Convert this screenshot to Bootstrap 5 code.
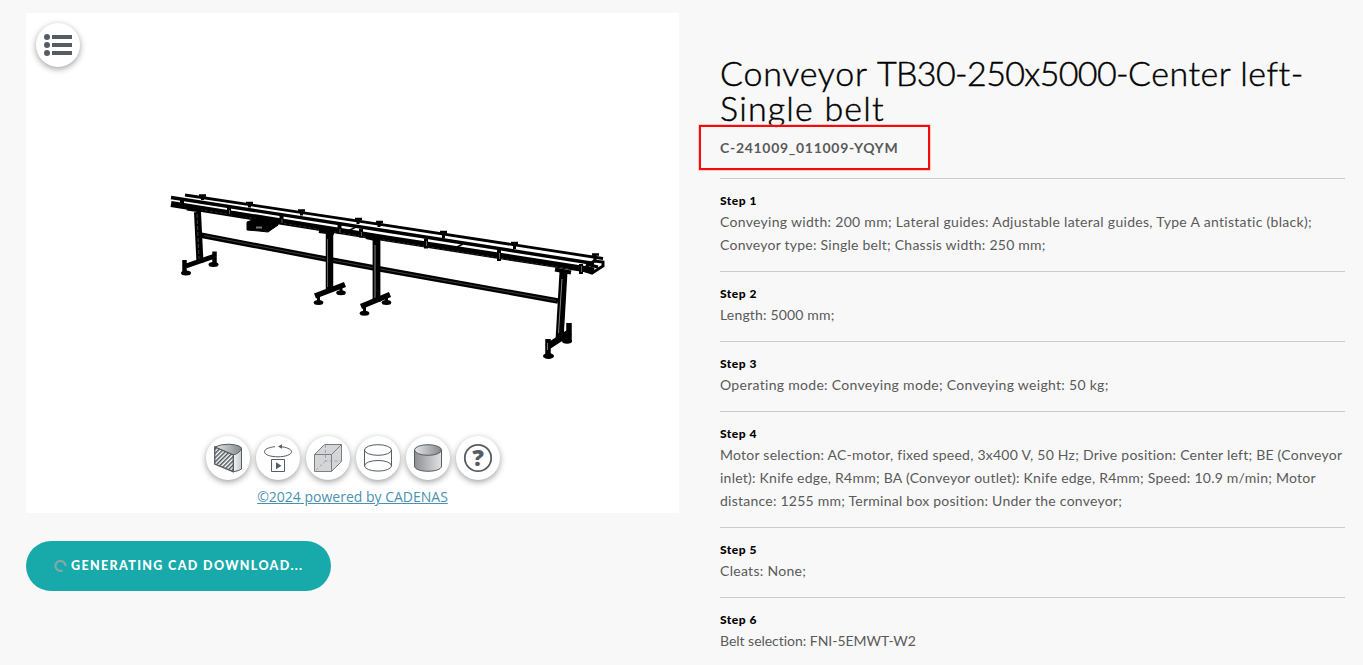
<!DOCTYPE html>
<html lang="en">
<head>
<meta charset="utf-8">
<meta name="viewport" content="width=device-width, initial-scale=1">
<title>Conveyor configuration</title>
<link href="https://cdn.jsdelivr.net/npm/bootstrap@5.3.0/dist/css/bootstrap.min.css" rel="stylesheet">
<style>
body{background:#f8f8f8;color:#5a5a5a;font-family:Lato,"Liberation Sans",sans-serif;height:665px;overflow:hidden}
.page-grid{padding:13px 18px 0 26px}
.viewer-col{width:653px;margin-right:41px}
.viewer{height:500px;background:#fff}
.round-btn{width:44px;height:44px;background:#fff;box-shadow:0 2px 6px rgba(0,0,0,.38);border:0;padding:0}
.round-btn svg{display:block}
.menu-btn{margin:10px 0 0 10px}
.model{margin:113px 0 66px 134px}
.tools{gap:6px;margin-left:1px}
.powered{font:14px/20px "Open Sans",sans-serif;color:#4a90b0;margin-top:7px}
.cad-btn,.cad-btn:hover{width:305px;height:50px;margin-top:28px;background:#18aaab;color:#fff;font-size:12.5px;font-weight:900;letter-spacing:1.36px;padding-left:28px}
.details{width:625px;padding-top:42px}
.details h1{font-size:34px;line-height:35px;font-weight:300;color:#000;letter-spacing:1.2px;margin:0;-webkit-text-stroke:.45px #000}
.t-word{letter-spacing:.75px}
.t-code{letter-spacing:-.62px}
.t-pos{letter-spacing:.5px}
.code-row{height:53px;padding-top:13px;font-size:14px;line-height:20px;font-weight:700;letter-spacing:.7px}
.red-box{left:699px;top:125px;width:231px;height:45px;border:2px solid #f60a0a;box-shadow:0 0 0 .5px #ff9a9a}
.step{border-top:1px solid #ccc;padding:11px 0 15px;font-size:14px;line-height:23px;letter-spacing:.24px;white-space:nowrap}
.step h2{font-size:12px;line-height:21px;font-weight:900;color:#000;letter-spacing:.5px;margin:0 0 -1px}
.ls-wide{letter-spacing:.3px}
.ls-snug{letter-spacing:.17px}
.ls-none{letter-spacing:-.03px}
</style>
</head>
<body>
<main class="page-grid d-flex">
<section class="viewer-col flex-shrink-0">
<div class="viewer d-flex flex-column align-items-start">
<button class="round-btn menu-btn rounded-circle flex-shrink-0" aria-label="Menu"><svg width="44" height="44" fill="#555c63"><circle cx="11" cy="14" r="3"/><circle cx="11" cy="22" r="3"/><circle cx="11" cy="30" r="3"/><path d="M16 12h20v4H16zM16 20h20v4H16zM16 28h20v4H16z"/></svg></button>
<svg class="model flex-shrink-0" width="460" height="190" viewBox="160 180 460 190" fill="none" stroke="#000">
<path d="M200 235L326 259L380 269L558 301" stroke-width="5.4"/><path d="M204 235.6L326 259L380 269L556 300.5" stroke="#555" stroke-width=".7"/>
<path d="M185 195L390 225.8L603 258.5" stroke-width="2.8"/>
<path d="M171 197.5L390 231.5L594 263.5" stroke-width="3.4"/>
<path d="M171 204L390 239L594 270.5" stroke-width="6.3"/>
<path d="M190 208L390 241L570 269" stroke="#444" stroke-width=".6" stroke-dasharray="3 2"/>
<path d="M187 208.500l14 2M232 213l15 3M319 231l15 2M366 237l14 3M555 269.500l16 3" stroke-width="4"/>
<path d="M580 269l12 4 11-7v-4l-9-1-8 6M586 264l12 3" stroke-width="3"/>
<path d="M202.500 195v5M249.500 202.500v5M301.500 210.500v5M358 219v5M379 222v5M443.500 232v6M514.500 243v6M595 254v6" stroke-width="3"/>
<path d="M199 195.500h7M246 203h7M298 210.500h7M355 219h7M376 222h7M440 232h7M511 243h7M592 254.500h7" stroke-width="2.5"/>
<path d="M182 199v8M229 207v9M281.500 215v9M339.500 225v9M361 228.500v9M426 238.500v10M499 250v11M581 264v10" stroke-width="4"/>
<path d="M229.500 210v4M282 219v4M340 229v4M361.500 232v4M426.500 241v5M499.500 253v6M581.500 266v6" stroke="#777" stroke-width=".8"/>
<path d="M247 222l11-4 20 4v3l-10 7-9-1-12-1z" fill="#000"/><path d="M256 226.500h6v2h-6z" fill="#777" stroke="none"/><path d="M455 248l8-4M348 231l8-4" stroke-width="1.5"/>
<g>
<path d="M197.500 212L200 263" stroke-width="7"/><path d="M197 214L199 259" stroke="#555" stroke-width=".8" stroke-dasharray="4 2"/>
<path d="M186 266L215 256" stroke-width="5"/><path d="M184.500 260v12M214.500 251.500v12" stroke-width="4.500"/>
<path d="M329.500 231v60" stroke-width="7.500"/><path d="M327.500 239v48" stroke="#777" stroke-width=".8"/>
<path d="M315 296L345 284.500" stroke-width="5.500"/><path d="M318.500 297v5M341 287v6" stroke-width="3"/>
<path d="M376.500 240v62" stroke-width="7.800"/><path d="M375 245v53" stroke="#888" stroke-width="1"/>
<path d="M361 306.500L390 294.500" stroke-width="5.500"/><path d="M364.500 307v6M386.500 297v5" stroke-width="3"/>
<path d="M563.500 272L559.500 340" stroke-width="8"/><path d="M562 279L558.500 333" stroke="#888" stroke-width="1"/>
<path d="M547 347L570 332" stroke-width="6.500"/><path d="M548 339v15M569 323v19" stroke-width="5.500"/><path d="M547.500 343v7" stroke="#777" stroke-width="1"/>
<g fill="#000" stroke="none"><ellipse cx="186" cy="273" rx="5" ry="2.500"/><ellipse cx="213.500" cy="264.500" rx="5" ry="2.500"/><ellipse cx="318.500" cy="302.500" rx="4.800" ry="2.500"/><ellipse cx="341" cy="292.800" rx="4.800" ry="2.500"/><ellipse cx="364.500" cy="313.300" rx="4.800" ry="2.500"/><ellipse cx="386.500" cy="302.500" rx="4.800" ry="2.500"/><ellipse cx="548.500" cy="356" rx="5.500" ry="3"/><ellipse cx="567" cy="341" rx="5" ry="2.800"/></g>
</g>
</svg>
<div class="tools d-flex align-self-center">
<button class="round-btn rounded-circle" aria-label="Cross section"><svg width="44" height="44"><defs><linearGradient id="metal"><stop stop-color="#8d8f92"/><stop offset="1" stop-color="#e1e2e3"/></linearGradient><linearGradient id="lid"><stop stop-color="#e5e5e6"/><stop offset="1" stop-color="#85888b"/></linearGradient><pattern id="hatch" width="3" height="3" patternUnits="userSpaceOnUse" patternTransform="rotate(45)"><path fill="#fff" d="M0 0h4v4H0z"/><path fill="#4c5359" d="M0 0h1.500v4H0z"/></pattern></defs><g stroke="#555c63" stroke-width="1"><path d="M27.300 19L35.500 12V33Q33 35 27.300 35.700Z" fill="url(#lid)" fill-opacity=".45"/><path d="M8.700 11Q15 8 23 8.200Q35 9 35.500 12.500Q34 17 27.300 19Z" fill="url(#lid)"/><path d="M8.700 11L27.300 19V35.700L8.700 28Z" fill="url(#hatch)" stroke-width="1.300"/></g></svg></button>
<button class="round-btn rounded-circle" aria-label="Rotate"><svg width="44" height="44" fill="none" stroke="#555c63"><path d="M19 10.700C12 11.400 8.500 13.400 8.500 15.800C8.500 19 15 20.800 22 20.800S35.500 18.800 35.500 15.800C35.500 13 30 11 24 10.700"/><path d="M22 10.500l4-2.300v4.600z" fill="#555c63" stroke="none"/><path d="M15.500 23.500h13v12h-13z"/><path d="M20 26.300l5.500 3.400-5.500 3.600z" fill="#555c63" stroke="none"/></svg></button>
<button class="round-btn rounded-circle" aria-label="Box view"><svg width="44" height="44" fill="#d4d5d7" stroke="#7b7f83"><path d="M8.500 18.500L18.500 8.500H35.500V25.500L25.500 35.500H8.500Z"/><path d="M8.500 18.500h17v17M25.500 18.500l10-10" fill="none"/><path d="M19.500 9v16H35M19.500 25L9 35" fill="none" stroke="#a0a3a6" stroke-dasharray="3 2"/></svg></button>
<button class="round-btn rounded-circle" aria-label="Wireframe"><svg width="44" height="44" fill="none" stroke="#555c63"><ellipse cx="22" cy="14" rx="13.500" ry="5.300"/><ellipse cx="22" cy="29.800" rx="13.500" ry="5.300"/><path d="M8.500 14v16M35.500 14v16"/></svg></button>
<button class="round-btn rounded-circle" aria-label="Shaded"><svg width="44" height="44" stroke="#555c63"><path d="M8.500 14v16c0 7 27 7 27 0V14" fill="url(#metal)"/><ellipse cx="22" cy="14" rx="13.500" ry="5.300" fill="url(#lid)"/></svg></button>
<button class="round-btn rounded-circle" aria-label="Help"><svg width="44" height="44"><circle cx="22" cy="22" r="13.200" fill="none" stroke="#555c63" stroke-width="1.800"/><text x="22" y="30" text-anchor="middle" font-family="Open Sans" font-weight="800" font-size="23" fill="#555c63">?</text></svg></button>
</div>
<a href="#" class="powered align-self-center">©2024 powered by CADENAS</a>
</div>
<button class="cad-btn btn border-0 rounded-pill d-flex align-items-center"><svg class="flex-shrink-0" width="13" height="13" fill="none" stroke="#8da7a7" stroke-width="2"><path d="M8.500 10.500A5 5 0 1 1 11.500 6"/></svg><span class="ms-1 text-nowrap">GENERATING CAD DOWNLOAD...</span></button>
</section>
<section class="details flex-shrink-0">
<h1 class="text-nowrap"><span class="t-word">Conveyor </span><span class="t-code">TB30-250x5000-</span><span class="t-pos">Center left-</span><br>Single belt</h1>
<div class="code-row">C-241009_011009-YQYM</div>
<article class="step"><h2>Step 1</h2><span class="ls-wide">Conveying width: 200 mm; Lateral guides: Adjustable lateral guides, Type A antistatic (black);</span><br>Conveyor type: Single belt; Chassis width: 250 mm;</article>
<article class="step"><h2>Step 2</h2><span class="ls-snug">Length: 5000 mm;</span></article>
<article class="step"><h2>Step 3</h2><span class="ls-wide">Operating mode: Conveying mode; Conveying weight: 50 kg;</span></article>
<article class="step"><h2>Step 4</h2>Motor selection: AC-motor, fixed speed, 3x400 V, 50 Hz; Drive position: Center left; BE (Conveyor<br>inlet): Knife edge, R4mm; BA (Conveyor outlet): Knife edge, R4mm; Speed: 10.9 m/min; Motor<br>distance: 1255 mm; Terminal box position: Under the conveyor;</article>
<article class="step"><h2>Step 5</h2><span class="ls-wide">Cleats: None;</span></article>
<article class="step"><h2>Step 6</h2><span class="ls-none">Belt selection: FNI-5EMWT-W2</span></article>
</section>
</main>
<div class="red-box position-absolute"></div>
<script src="https://cdn.jsdelivr.net/npm/bootstrap@5.3.0/dist/js/bootstrap.bundle.min.js"></script>
</body>
</html>
